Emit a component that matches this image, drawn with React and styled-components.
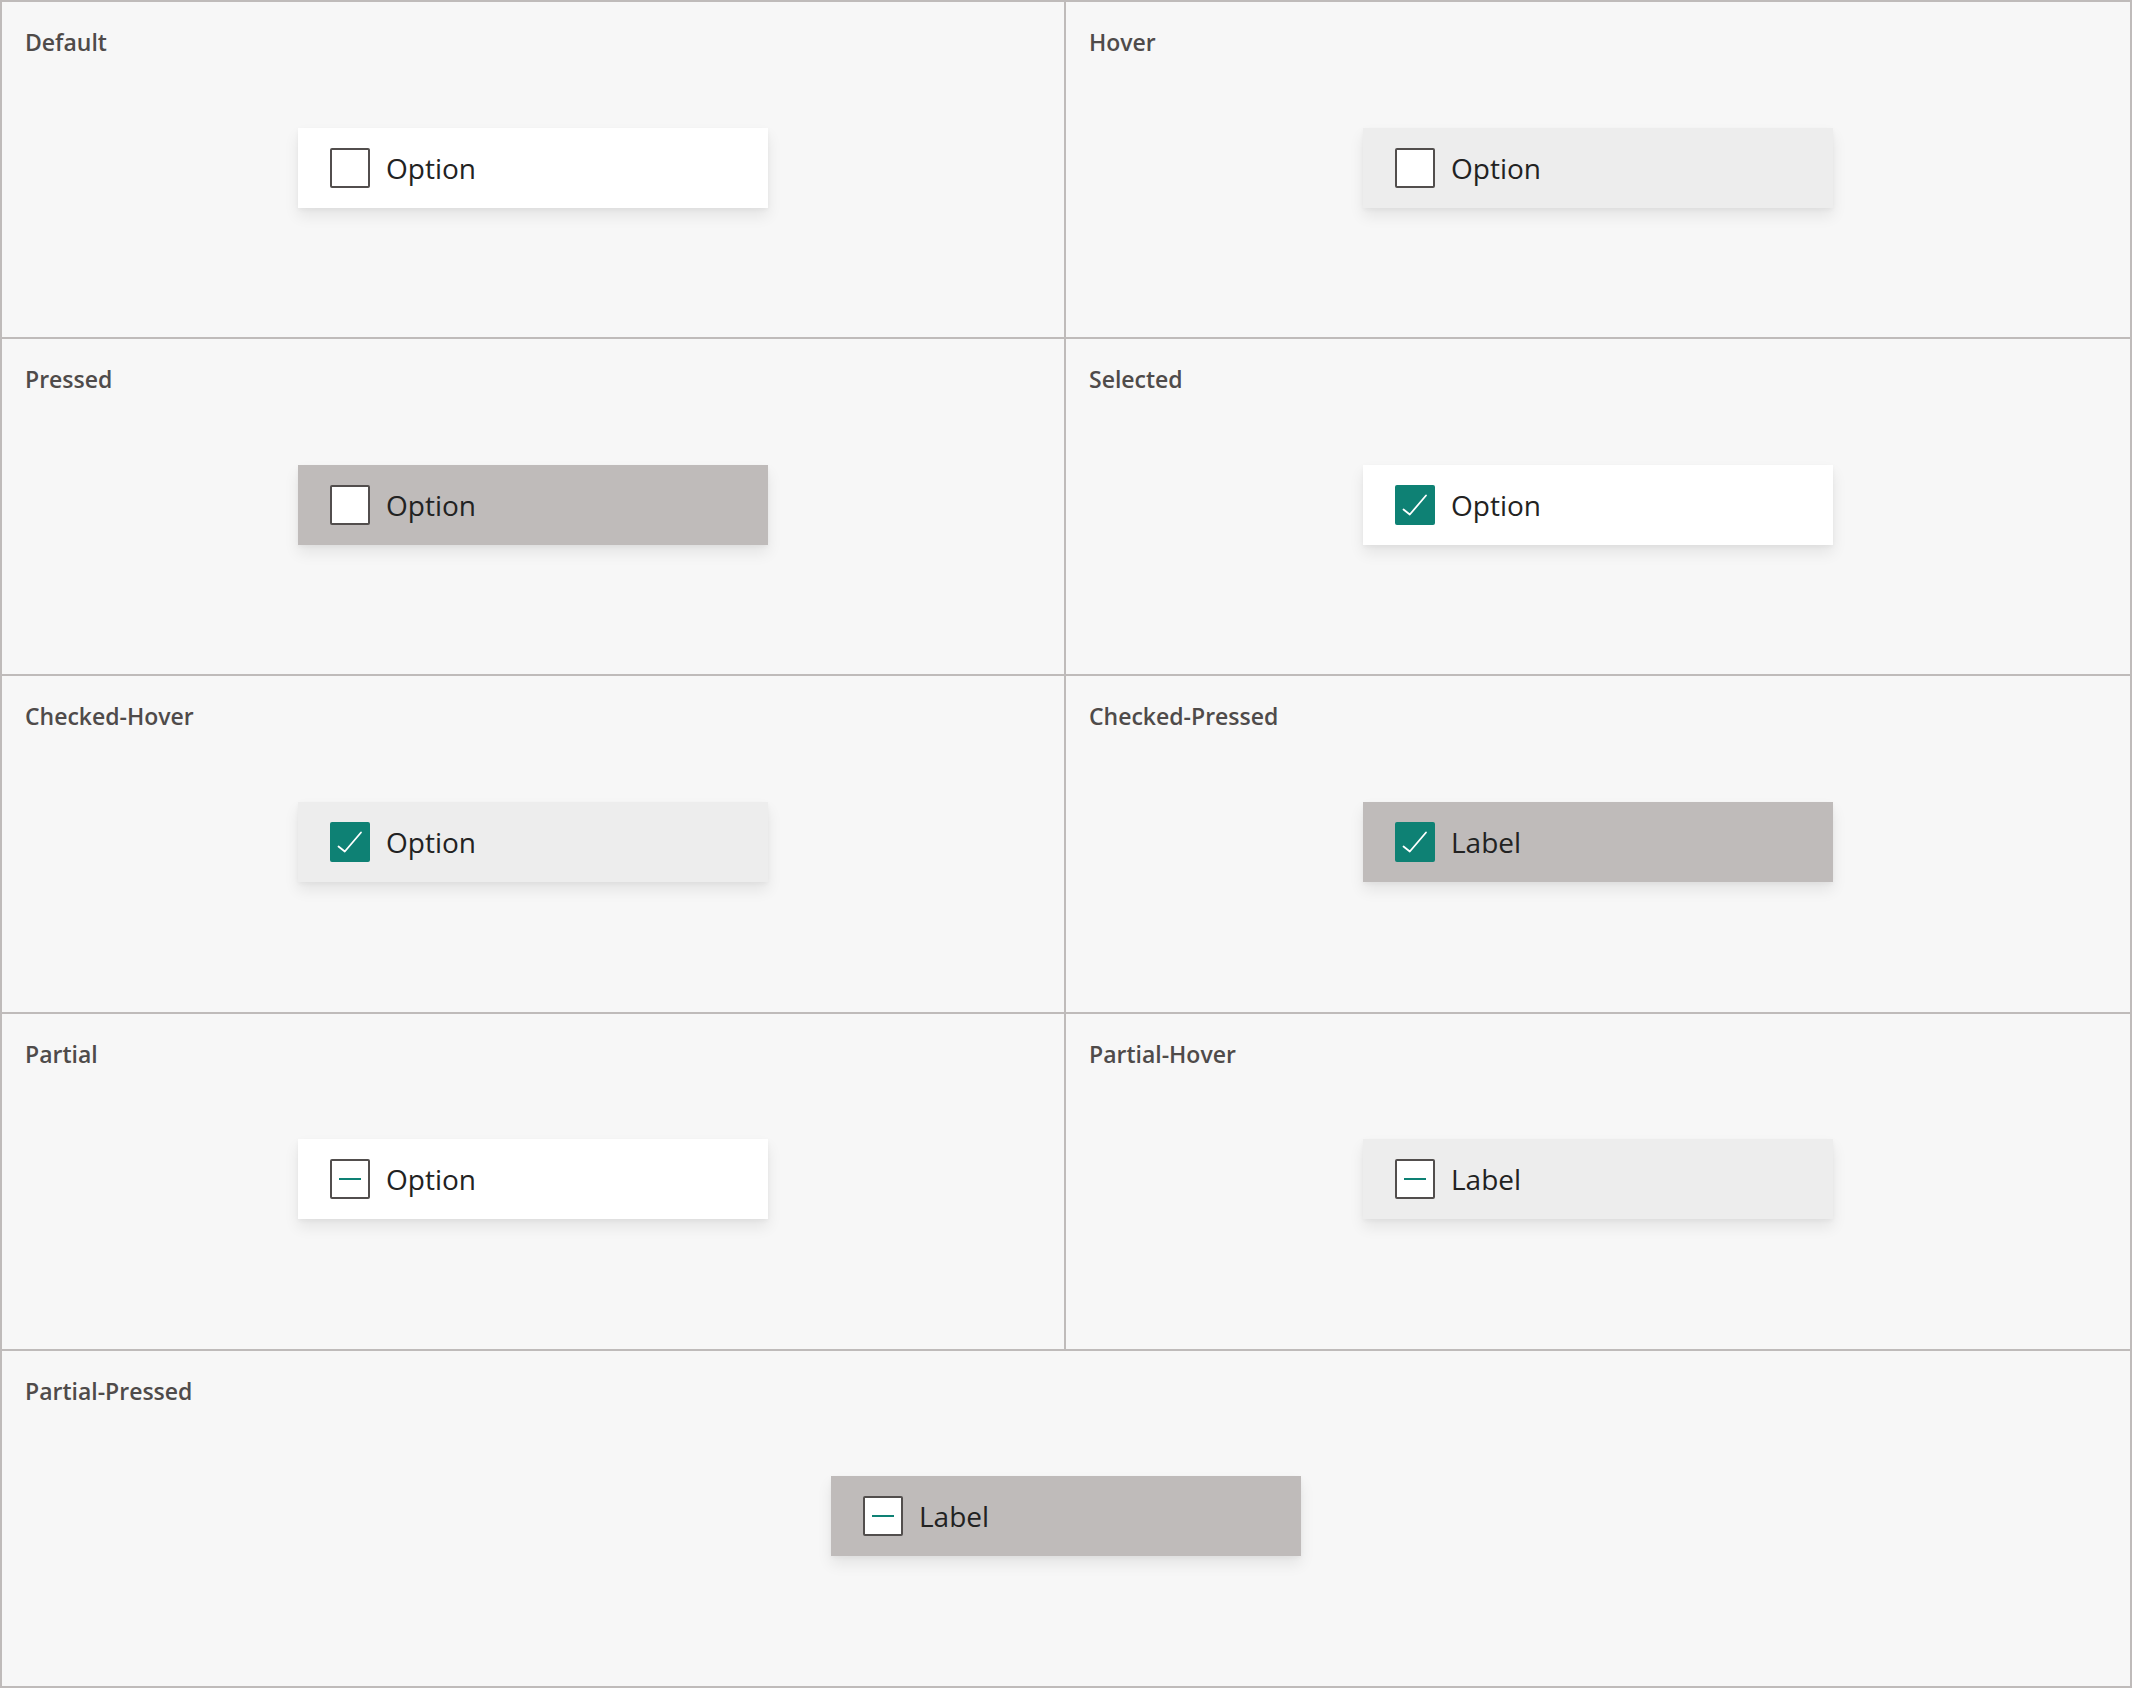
import React from 'react';
import styled, { createGlobalStyle } from 'styled-components';

const GlobalStyle = createGlobalStyle`
  html, body {
    margin: 0;
    padding: 0;
    background: #f7f7f7;
  }
  * {
    box-sizing: border-box;
  }
`;

const colors = {
  line: '#bfbbba',
  cell: '#f7f7f7',
  label: '#4f4b4a',
  text: '#222222',
  teal: '#0e8174',
  boxBorder: '#524e4d',
};

const buttonBg = {
  default: '#ffffff',
  hover: '#ededed',
  pressed: '#bfbbba',
};

const Board = styled.div`
  display: grid;
  grid-template-columns: 1062px 1fr;
  grid-auto-rows: 1fr;
  gap: 2px;
  padding: 2px;
  width: 2132px;
  height: 1688px;
  background: ${colors.line};
  font-family: "Open Sans", "Noto Sans", sans-serif;
`;

// label and sample share the same grid area; label sits top-left, sample centred
const Cell = styled.section`
  display: grid;
  grid-template: 1fr / 1fr;
  padding: 24px 23px 28px;
  background: ${colors.cell};
  grid-column: ${({ wide }) => (wide ? '1 / span 2' : 'auto')};

  & > * {
    grid-area: 1 / 1;
  }
`;

const StateLabel = styled.h3`
  margin: 0;
  align-self: start;
  justify-self: start;
  font-size: 23px;
  font-weight: 600;
  color: ${colors.label};
`;

const OptionButton = styled.div`
  align-self: center;
  justify-self: center;
  display: flex;
  align-items: center;
  gap: 16px;
  width: 470px;
  height: 80px;
  padding-left: 32px;
  background: ${({ variant }) => buttonBg[variant]};
  box-shadow: 0 8px 14px rgba(0, 0, 0, 0.08), 0 2px 4px rgba(0, 0, 0, 0.04);
`;

const Box = styled.span`
  display: flex;
  align-items: center;
  justify-content: center;
  width: 40px;
  height: 40px;
  border-radius: 2px;
  border: 2px solid ${({ checked }) => (checked ? colors.teal : colors.boxBorder)};
  background: ${({ checked }) => (checked ? colors.teal : '#ffffff')};
`;

const Dash = styled.span`
  width: 22px;
  height: 2px;
  background: ${colors.teal};
`;

const OptionText = styled.span`
  font-size: 28px;
  color: ${colors.text};
  line-height: 1;
`;

const CheckMark = () => (
  <svg width="40" height="40" viewBox="0 0 40 40" style={{ margin: -2 }}>
    <path d="M8.5 24.5 L14.8 29.5 L31 10.5" fill="none" stroke="#ffffff" strokeWidth="1.8" strokeLinecap="round" strokeLinejoin="round" />
  </svg>
);

const states = [
  { name: 'Default', variant: 'default', mark: 'none', text: 'Option' },
  { name: 'Hover', variant: 'hover', mark: 'none', text: 'Option' },
  { name: 'Pressed', variant: 'pressed', mark: 'none', text: 'Option' },
  { name: 'Selected', variant: 'default', mark: 'check', text: 'Option' },
  { name: 'Checked-Hover', variant: 'hover', mark: 'check', text: 'Option' },
  { name: 'Checked-Pressed', variant: 'pressed', mark: 'check', text: 'Label' },
  { name: 'Partial', variant: 'default', mark: 'partial', text: 'Option' },
  { name: 'Partial-Hover', variant: 'hover', mark: 'partial', text: 'Label' },
  { name: 'Partial-Pressed', variant: 'pressed', mark: 'partial', text: 'Label', wide: true },
];

const App = () => (
  <>
    <GlobalStyle />
    <Board>
      {states.map((s) => (
        <Cell key={s.name} wide={s.wide}>
          <StateLabel>{s.name}</StateLabel>
          <OptionButton variant={s.variant}>
            <Box checked={s.mark === 'check'}>
              {s.mark === 'check' && <CheckMark />}
              {s.mark === 'partial' && <Dash />}
            </Box>
            <OptionText>{s.text}</OptionText>
          </OptionButton>
        </Cell>
      ))}
    </Board>
  </>
);

export default App;
